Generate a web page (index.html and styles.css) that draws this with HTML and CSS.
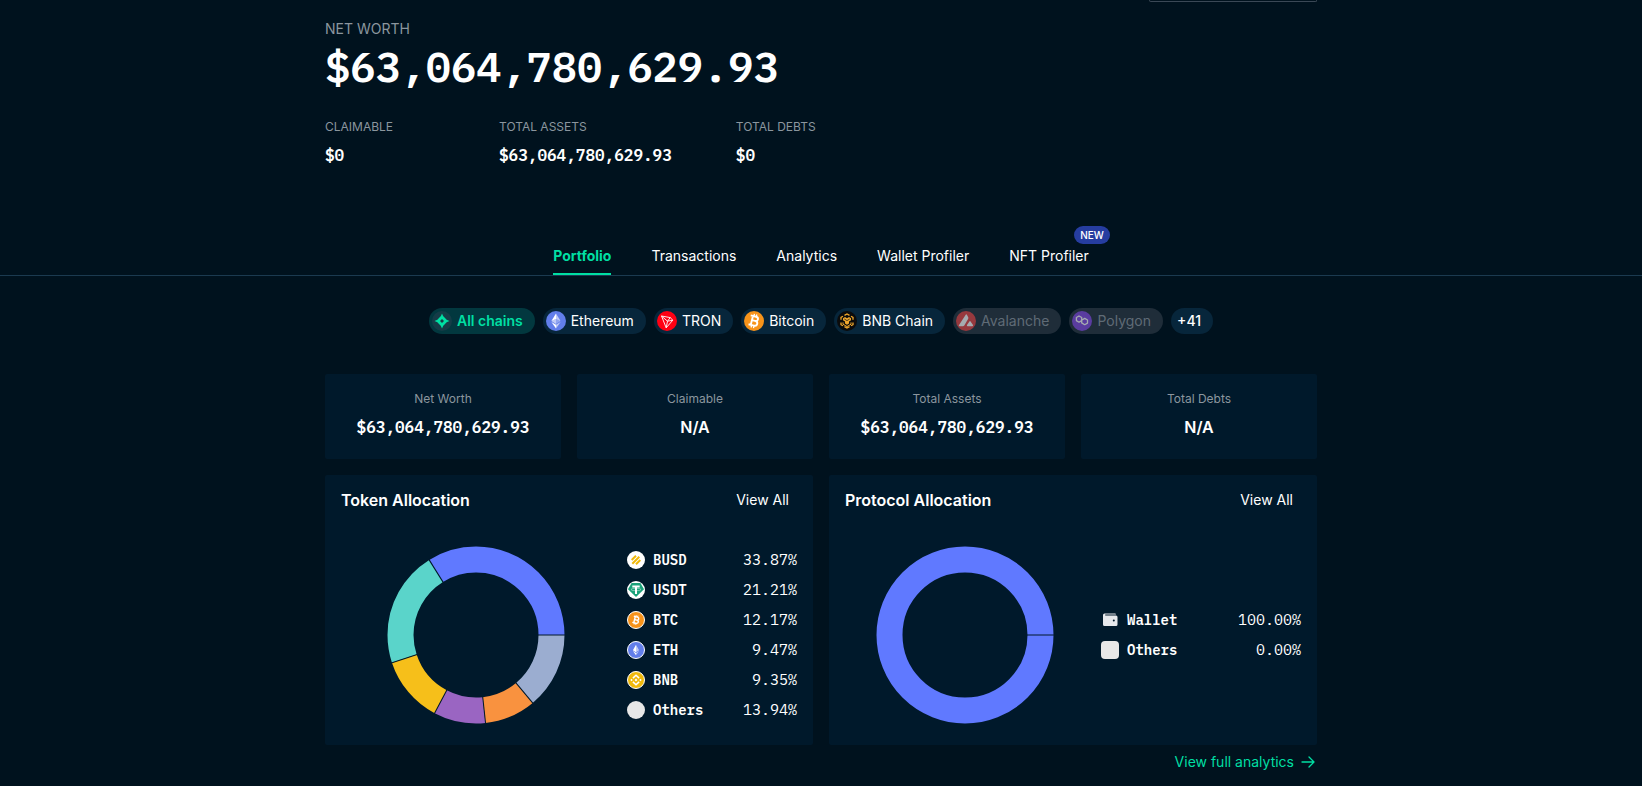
FILE: index.html
```html
<!DOCTYPE html>
<html lang="en">

<head>
    <meta charset="UTF-8">
    <meta name="viewport" content="width=device-width, initial-scale=1.0">
    <title>Portfolio</title>
    <link rel="stylesheet" href="styles.css">
</head>

<body>
    <header class="container summary">
        <div class="wallet-box"></div>
        <p class="summary-label">NET WORTH</p>
        <h1 class="summary-total">$63,064,780,629.93</h1>
        <dl class="summary-stats">
            <div class="stat">
                <dt>CLAIMABLE</dt>
                <dd>$0</dd>
            </div>
            <div class="stat">
                <dt>TOTAL ASSETS</dt>
                <dd>$63,064,780,629.93</dd>
            </div>
            <div class="stat">
                <dt>TOTAL DEBTS</dt>
                <dd>$0</dd>
            </div>
        </dl>
    </header>

    <nav class="tabs">
        <a class="tab active" href="#">Portfolio</a>
        <a class="tab" href="#">Transactions</a>
        <a class="tab" href="#">Analytics</a>
        <a class="tab" href="#">Wallet Profiler</a>
        <a class="tab" href="#">NFT Profiler<span class="badge">NEW</span></a>
    </nav>

    <main class="container">
        <div class="chains">
            <button class="chain active" type="button">
                <svg viewBox="0 0 20 20">
                    <circle cx="10" cy="10" r="10" fill="#153c47" />
                    <path fill="#00dfa3" fill-rule="evenodd" d="M10 2.500q1 3.700 3 4.500 1 2 4.500 3-3.500 1-4.500 3-2 1-3 4.500-1-3.500-3-4.500-1-2-4.500-3 3.500-1 4.500-3 2-.8 3-4.500zM10 8l-2 2 2 2 2-2z" />
                </svg>
                All chains
            </button>
            <button class="chain" type="button">
                <svg viewBox="0 0 20 20">
                    <circle cx="10" cy="10" r="10" fill="#627eea" />
                    <path fill="#fff" d="M10 2.500v5.600l4.600 2z" opacity=".6" />
                    <path fill="#fff" d="M10 2.500l-4.600 7.600L10 8.100z" />
                    <path fill="#fff" d="M10 13.800v3.700l4.600-6.400z" opacity=".6" />
                    <path fill="#fff" d="M10 17.500v-3.700l-4.600-2.700z" />
                    <path fill="#fff" d="M10 12.900l4.600-2.800-4.600-2z" opacity=".3" />
                    <path fill="#fff" d="M5.400 10.100l4.600 2.800V8.100z" opacity=".6" />
                </svg>
                Ethereum
            </button>
            <button class="chain" type="button">
                <svg viewBox="0 0 20 20">
                    <circle cx="10" cy="10" r="10" fill="#ff0013" />
                    <path fill="none" stroke="#fff" stroke-width=".9" stroke-linejoin="round" d="M4.500 5l8.700 1.600 2.600 2.600-6.600 7.600zM4.500 5l6 5.200 2.700-3.600M10.500 10.200l5.300-1M10.500 10.200l-1.300 6.600" />
                </svg>
                TRON
            </button>
            <button class="chain" type="button">
                <svg viewBox="0 0 20 20">
                    <circle cx="10" cy="10" r="10" fill="#f7931a" />
                    <g transform="rotate(14 10 10)" fill="none" stroke="#fff" stroke-width="1.900">
                        <path d="M5.500 5.400H11c3.200 0 3.200 4.300 0 4.300H7.800M11 9.700c3.800 0 3.800 4.800 0 4.800H5.500M7.800 5.400v9.100" />
                        <path stroke-width="1.300" d="M8.700 3v2.400M11.200 3v2.400M8.700 14.500v2.500M11.200 14.500v2.500" />
                    </g>
                </svg>
                Bitcoin
            </button>
            <button class="chain" type="button">
                <svg viewBox="0 0 20 20">
                    <circle cx="10" cy="10" r="10" fill="#0b0b0b" />
                    <g fill="none" stroke="#f0a82d" stroke-width="1.300">
                        <path d="M7.500 4.400L10 3l2.500 1.400M14 5.300l2 1.100v2.400M16 11.400v2.300l-2 1.100M12.500 15.600L10 17l-2.500-1.400M6 14.800l-2-1.100v-2.300M4 8.800V6.400l2-1.100" />
                    </g>
                    <path fill="#f0a82d" d="M6 7.200L8 6l2 1.200L12 6l2 1.200v2l-2 1.200v2.200l-2 1.200-2-1.200v-2.200L6 9.200z" />
                    <path fill="none" stroke="#0b0b0b" stroke-width=".7" d="M7.300 8l2.700 1.600L12.700 8" />
                    <path fill="none" stroke="#f0a82d" d="M6 11.400v1.800l4 2.400 4-2.400v-1.800" />
                </svg>
                BNB Chain
            </button>
            <button class="chain disabled" type="button" disabled>
                <svg viewBox="0 0 20 20">
                    <circle cx="10" cy="10" r="10" fill="#e84142" />
                    <path fill="#fff" d="M9.700 3.700q.6-.8 1.200 0l1.300 2.500q.4.800 0 1.600l-3.900 6.600q-.5.800-1.400.8H3.500q-1.200 0-.6-1zM13.400 10.400q.6-.9 1.200 0l2.400 3.700q.4 1.100-.6 1.100h-4.900q-1 0-.5-1.100z" />
                </svg>
                Avalanche
            </button>
            <button class="chain disabled" type="button" disabled>
                <svg viewBox="0 0 20 20">
                    <circle cx="10" cy="10" r="10" fill="#8247e5" />
                    <path fill="none" stroke="#fff" stroke-width="1.300" stroke-linejoin="round" d="M10 9.400L7 11.200 4.400 9.600V6.500L7 5l2.700 1.500v5.400l3 1.800 2.800-1.600V9l-2.800-1.600L10 9" />
                </svg>
                Polygon
            </button>
            <button class="chain more" type="button">+41</button>
        </div>

        <dl class="cards">
            <div class="card">
                <dt>Net Worth</dt>
                <dd class="mono">$63,064,780,629.93</dd>
            </div>
            <div class="card">
                <dt>Claimable</dt>
                <dd>N/A</dd>
            </div>
            <div class="card">
                <dt>Total Assets</dt>
                <dd class="mono">$63,064,780,629.93</dd>
            </div>
            <div class="card">
                <dt>Total Debts</dt>
                <dd>N/A</dd>
            </div>
        </dl>

        <div class="panels">
            <section class="panel">
                <div class="panel-head">
                    <h2>Token Allocation</h2>
                    <a href="#">View All</a>
                </div>
                <div class="panel-body">
                    <div class="chart">
                        <svg viewBox="-89 -89 178 178">
                            <!-- slices run counterclockwise from 3 o'clock -->
                            <g transform="scale(1 -1)" fill="none" stroke-width="26">
                                <circle r="75.500" pathLength="100" stroke="#6079ff" stroke-dasharray="33.870 100" />
                                <circle r="75.500" pathLength="100" stroke="#5ad4ca" stroke-dasharray="21.210 100" stroke-dashoffset="-33.870" />
                                <circle r="75.500" pathLength="100" stroke="#f6bf1a" stroke-dasharray="12.170 100" stroke-dashoffset="-55.080" />
                                <circle r="75.500" pathLength="100" stroke="#9a65c2" stroke-dasharray="9.470 100" stroke-dashoffset="-67.250" />
                                <circle r="75.500" pathLength="100" stroke="#f9923f" stroke-dasharray="9.350 100" stroke-dashoffset="-76.720" />
                                <circle r="75.500" pathLength="100" stroke="#9badd0" stroke-dasharray="13.930 100" stroke-dashoffset="-86.070" />
                            </g>
                            <g stroke="#00192b">
                                <path d="M62 0h28" />
                                <path d="M62 0h28" transform="rotate(-121.930)" />
                                <path d="M62 0h28" transform="rotate(-198.290)" />
                                <path d="M62 0h28" transform="rotate(-242.100)" />
                                <path d="M62 0h28" transform="rotate(-276.190)" />
                                <path d="M62 0h28" transform="rotate(-309.850)" />
                            </g>
                        </svg>
                    </div>
                    <ul class="legend legend-tokens">
                        <li>
                            <svg viewBox="0 0 18 18">
                                <circle cx="9" cy="9" r="9" fill="#fff" />
                                <path stroke="#f0b90b" stroke-width="2" d="M4.700 9l4.300-4.300M5.300 12.700l7-7M9 13.300l4.300-4.300" />
                            </svg>
                            <span class="name">BUSD</span><span class="value">33.87%</span>
                        </li>
                        <li>
                            <svg viewBox="0 0 18 18">
                                <circle cx="9" cy="9" r="9" fill="#fff" />
                                <path fill="#1ba27a" d="M4.600 2h8.800l3.600 6.200L9 16 1 8.200z" />
                                <path fill="#fff" d="M5.300 4.500h7.400v1.900h-2.700V13H8V6.400H5.300z" />
                                <ellipse cx="9" cy="8.500" rx="5" ry="1.200" fill="none" stroke="#fff" stroke-width=".4" />
                            </svg>
                            <span class="name">USDT</span><span class="value">21.21%</span>
                        </li>
                        <li>
                            <svg viewBox="0 0 18 18">
                                <circle cx="9" cy="9" r="8.500" fill="#f7931a" stroke="#fff" />
                                <g transform="rotate(14 9 9)" fill="none" stroke="#fff" stroke-width="1.400">
                                    <path d="M6 5.900h3.700c2.300 0 2.300 3 0 3H7.500M9.700 8.900c2.700 0 2.700 3.300 0 3.300H6M7.500 5.900v6.300" />
                                    <path stroke-width="1" d="M8.100 4.300v1.600M9.900 4.300v1.600M8.100 12.200v1.600M9.900 12.200v1.600" />
                                </g>
                            </svg>
                            <span class="name">BTC</span><span class="value">12.17%</span>
                        </li>
                        <li>
                            <svg viewBox="0 0 18 18">
                                <circle cx="9" cy="9" r="8.500" fill="#627eea" stroke="#fff" />
                                <path fill="#fff" d="M9 3.800v7.400L5.900 9.300zM9 14.300v-2.400l-3.100-1.800z" />
                                <path fill="#fff" opacity=".6" d="M9 3.800v7.400l3.100-1.900zM9 14.300v-2.400l3.100-1.800z" />
                            </svg>
                            <span class="name">ETH</span><span class="value">9.47%</span>
                        </li>
                        <li>
                            <svg viewBox="0 0 18 18">
                                <circle cx="9" cy="9" r="8.500" fill="#f0b90b" stroke="#fff" />
                                <path fill="none" stroke="#fff" stroke-width="1.500" d="M5.900 7.100L9 4.200l3.100 2.900M5.900 10.900L9 13.800l3.100-2.900" />
                                <path fill="#fff" d="M9 7.600L10.400 9 9 10.400 7.600 9zM4.500 7.800L5.700 9l-1.200 1.200L3.300 9zM13.500 7.800L14.700 9l-1.200 1.200L12.300 9z" />
                            </svg>
                            <span class="name">BNB</span><span class="value">9.35%</span>
                        </li>
                        <li>
                            <svg viewBox="0 0 18 18">
                                <circle cx="9" cy="9" r="9" fill="#e7e7e7" />
                            </svg>
                            <span class="name">Others</span><span class="value">13.94%</span>
                        </li>
                    </ul>
                </div>
            </section>

            <section class="panel">
                <div class="panel-head">
                    <h2>Protocol Allocation</h2>
                    <a href="#">View All</a>
                </div>
                <div class="panel-body">
                    <div class="chart">
                        <svg viewBox="-89 -89 178 178">
                            <circle r="75.500" fill="none" stroke="#6079ff" stroke-width="26" />
                            <path stroke="#00192b" d="M62 0h28" />
                        </svg>
                    </div>
                    <ul class="legend legend-protocols">
                        <li>
                            <svg viewBox="0 0 18 18">
                                <path fill="#e6e8ec" d="M3.500 2.500H14a1 1 0 0 1 1 1H4.200v1H15a1.500 1.500 0 0 1 1.500 1.500v7.500A1.500 1.500 0 0 1 15 15H3.500A1.500 1.500 0 0 1 2 13.500V4a1.500 1.500 0 0 1 1.500-1.500z" />
                                <circle cx="12.800" cy="9.600" r="1" fill="#00192b" />
                            </svg>
                            <span class="name">Wallet</span><span class="value">100.00%</span>
                        </li>
                        <li>
                            <svg viewBox="0 0 18 18">
                                <rect width="18" height="18" rx="4" fill="#e7e7e7" />
                            </svg>
                            <span class="name">Others</span><span class="value">0.00%</span>
                        </li>
                    </ul>
                </div>
            </section>
        </div>

        <a class="full-link" href="#">
            View full analytics
            <svg viewBox="0 0 14 14">
                <path fill="none" stroke="currentColor" stroke-width="1.300" stroke-linecap="round" stroke-linejoin="round" d="M1 7h12M8 2l5 5-5 5" />
            </svg>
        </a>
    </main>
</body>

</html>
```
FILE: styles.css
```css
* {
    padding: 0;
    margin: 0;
    box-sizing: border-box;
}

body {
    background: #00121e;
    color: #fff;
    font-family: Inter, "Liberation Sans", sans-serif;
    font-size: 14px;
    line-height: 20px;
}

a {
    color: inherit;
    text-decoration: none;
}

ul {
    list-style: none;
}

.container {
    max-width: 1024px;
    margin: 0 auto;
    padding: 0 16px;
}

.mono,
.stat dd,
.summary-total,
.legend {
    font-family: "IBM Plex Mono", "Liberation Mono", monospace;
}

/* net worth */
.wallet-box {
    width: 168px;
    height: 2px;
    margin-left: auto;
    border: solid 1px #3a4856;
    border-top: 0;
    border-radius: 0 0 4px 4px;
}

.summary-label {
    margin-top: 17px;
    color: #8b969e;
}

.summary-total {
    font-size: 42px;
    line-height: 56px;
    font-weight: 600;
}

.summary-stats {
    display: flex;
    gap: 64px;
    margin-top: 24px;
}

.stat {
    min-width: 110px;
}

.stat dt,
.card dt {
    font-size: 12px;
    line-height: 16px;
    color: #8b969e;
}

.stat dd,
.card dd {
    margin-top: 8px;
    font-size: 16px;
    line-height: 24px;
    font-weight: 600;
}

/* tabs */
.tabs {
    display: flex;
    justify-content: center;
    gap: 40px;
    margin-top: 79px;
    border-bottom: solid 1px #1b3a50;
}

.tab {
    position: relative;
    padding-bottom: 7px;
    border-bottom: solid 2px transparent;
}

.tab.active {
    color: #00dfa3;
    border-color: #00dfa3;
    font-weight: 700;
}

.badge {
    position: absolute;
    top: -20px;
    right: -21px;
    padding: 0 6px;
    border-radius: 9px;
    background: #263da0;
    font-size: 10px;
    line-height: 18px;
    font-weight: 500;
}

/* chains */
.chains {
    display: flex;
    flex-wrap: wrap;
    justify-content: center;
    gap: 8px;
    margin-top: 32px;
}

.chain {
    display: flex;
    align-items: center;
    gap: 5px;
    padding: 3px 12px 3px 3px;
    border: 0;
    border-radius: 13px;
    background: #07263b;
    color: #fff;
    font: inherit;
}

.chain svg {
    width: 20px;
    height: 20px;
}

.chain.active {
    background: #02383f;
    color: #00dfa3;
    font-weight: 600;
}

.chain.disabled {
    background: #1f2d39;
    color: #5f6b76;
}

.chain.disabled svg {
    opacity: 0.6;
}

.chain.more {
    padding-left: 6px;
    font-weight: 500;
}

/* cards */
.cards {
    display: grid;
    grid-template-columns: repeat(4, 1fr);
    gap: 16px;
    margin-top: 40px;
}

.card {
    padding: 17px 16px 20px;
    border-radius: 2px;
    background: #00192b;
    text-align: center;
}

/* allocation panels */
.panels {
    display: grid;
    grid-template-columns: 1fr 1fr;
    gap: 16px;
    margin-top: 16px;
}

.panel {
    padding: 15px 16px 16px;
    border-radius: 2px;
    background: #00192b;
}

.panel-head {
    display: flex;
    justify-content: space-between;
    align-items: center;
}

.panel-head h2 {
    font-size: 16px;
    line-height: 20px;
    font-weight: 600;
}

.panel-head a {
    padding: 0 8px;
}

.panel-body {
    display: flex;
    align-items: center;
    gap: 16px;
    min-height: 188px;
    margin-top: 31px;
}

.chart {
    flex: 1;
}

.chart svg {
    display: block;
    width: 178px;
    margin: 0 auto;
}

.legend li {
    display: flex;
    align-items: center;
    gap: 8px;
    height: 30px;
}

.legend-tokens {
    width: 170px;
}

.legend-protocols {
    width: 200px;
}

.legend svg {
    width: 18px;
    height: 18px;
}

.legend .name {
    font-weight: 600;
}

.legend .value {
    margin-left: auto;
    font-size: 15px;
}

.full-link {
    display: flex;
    justify-content: flex-end;
    align-items: center;
    gap: 7px;
    margin-top: 7px;
    padding-right: 2px;
    color: #00dfa3;
}

.full-link svg {
    width: 14px;
    height: 14px;
}
```
